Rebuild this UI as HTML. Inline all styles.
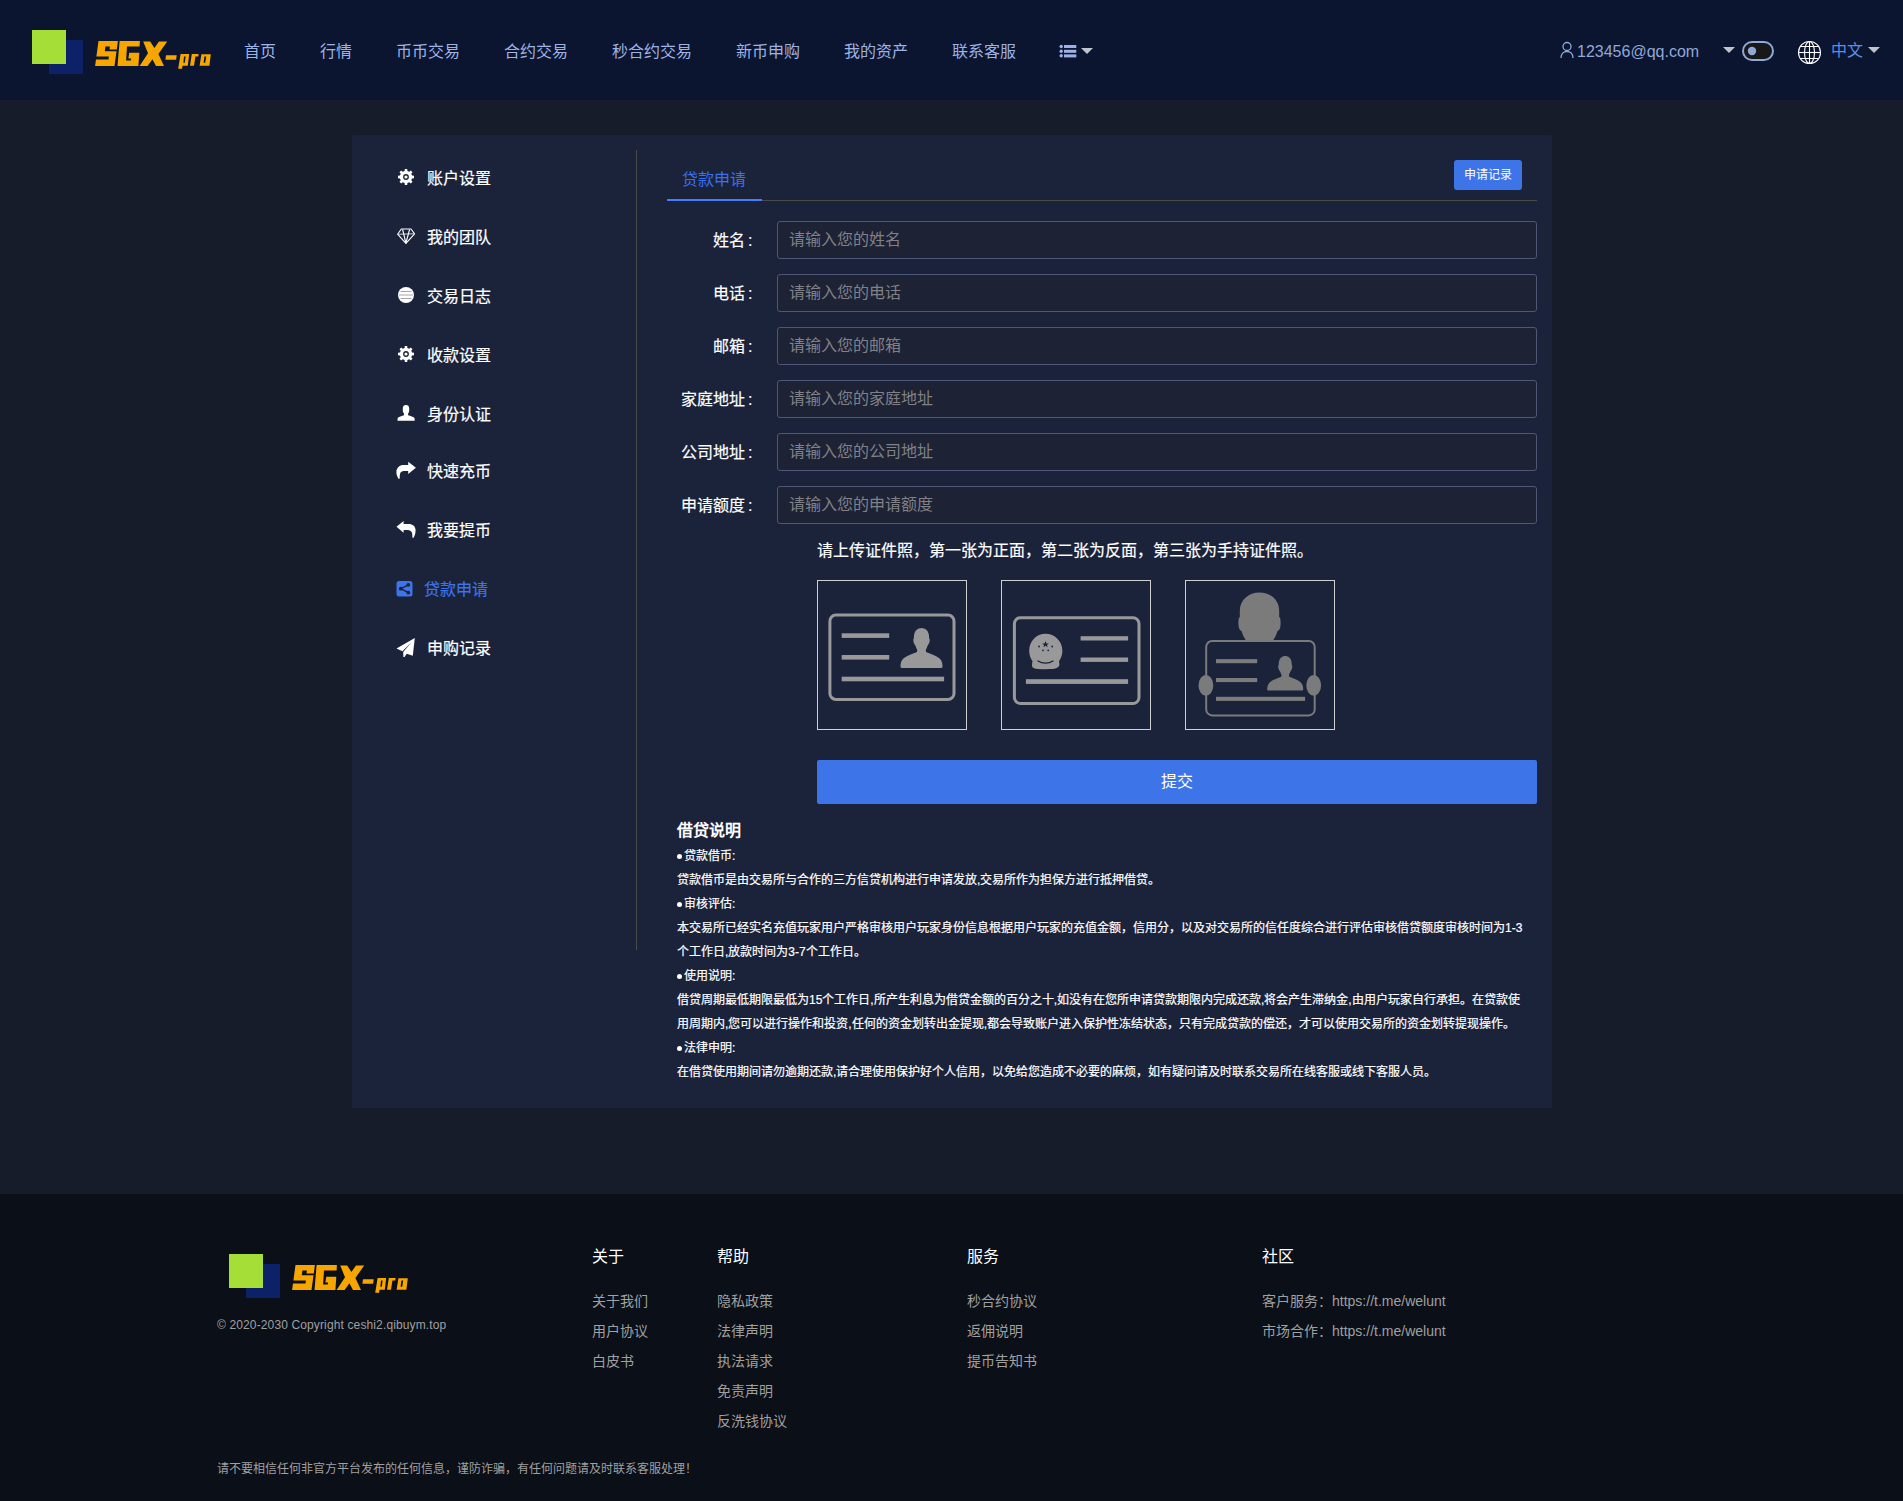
<!DOCTYPE html>
<html lang="zh-CN">
<head>
<meta charset="utf-8">
<style>
*{margin:0;padding:0;box-sizing:border-box}
html,body{width:1903px;height:1501px;overflow:hidden}
body{background:#171c2a;font-family:"Liberation Sans",sans-serif;color:#fff;position:relative}
.a{position:absolute;white-space:nowrap}
.b{-webkit-text-stroke:0.2px currentColor}
#hdr{position:absolute;left:0;top:0;width:1903px;height:100px;background:#0b1530}
.nav{position:absolute;left:244px;top:42px;height:20px;display:flex;gap:44px;font-size:16px;line-height:20px;color:#9db2e4;white-space:nowrap}
#panel{position:absolute;left:352px;top:135px;width:1200px;height:973px;background:#1b233b;border-radius:2px}
.side{position:absolute;left:427px;font-size:16px;line-height:20px;color:#fff;white-space:nowrap}
.sico{position:absolute;left:396px;width:20px;height:20px}
#vline{position:absolute;left:636px;top:150px;width:1px;height:800px;background:#4a4a4a}
.lbl{position:absolute;width:120px;left:632.5px;text-align:right;font-size:16px;line-height:20px;color:#fff;white-space:nowrap}
.inp{position:absolute;left:777px;width:760px;height:38px;background:#1e2235;border:1px solid #4e5775;border-radius:3px;font-size:16px;line-height:36px;color:#808186;padding-left:11px;white-space:nowrap}
.box{position:absolute;top:580px;width:150px;height:150px;border:1px solid #cfcfcf}
.note{position:absolute;left:677px;font-size:12px;line-height:24px;color:#fff;white-space:nowrap}
.dot{display:inline-block;width:5px;height:5px;border-radius:50%;background:#fff;margin-right:2px;vertical-align:1px}
#ftr{position:absolute;left:0;top:1194px;width:1903px;height:307px;background:#0a0f18}
.fh{position:absolute;font-size:16px;line-height:20px;color:#fff;white-space:nowrap}
.fl{position:absolute;font-size:14px;line-height:18px;color:#a0a0a0;white-space:nowrap}
</style>
</head>
<body>
<div id="hdr"></div>
<svg class="a" style="left:0;top:0" width="240" height="100" viewBox="0 0 240 100">
  <g>
    <rect x="49" y="40" width="34" height="34" fill="#0c2168"/>
    <rect x="32" y="30" width="34" height="34" fill="#a6de38"/>
    <g fill="#f7a600" transform="translate(92,38)">
      <path d="M6.5,3 L25.9,3 L24.8,11.4 L17.5,11.4 L17.9,8.5 L13.4,8.5 L12.8,13.2 L24.5,13.2 L22.5,28 L3.1,28 L4,21.5 L16.5,21.5 L16.9,18.6 L4.4,18.6 Z"/>
      <path d="M27.6,3 L47.9,3 L47.6,8.4 L35,8.4 L34.1,22.4 L38.8,22.4 L39.1,20.5 L36.4,20.5 L37.2,14.8 L47.3,14.8 L46.4,28 L25.5,28 Z"/>
      <path d="M51.2,3.4 L58.2,3.4 L62.4,10 L67,3.4 L75.2,3.4 L66.4,16 L72,28 L64,28 L60.4,21.2 L55.6,28 L47.6,28 L56,15.2 Z"/>
      <path d="M74,17.2 L84.7,17.2 L84.1,21.8 L73.4,21.8 Z"/>
    </g>
    <g fill="#f7a600">
      <path fill-rule="evenodd" d="M180.6,54 L189.2,54 L187.8,65.8 L182.5,65.8 L182.1,68.8 L178.2,68.8 Z M184,56.4 L185.6,56.4 L184.8,62.8 L183.4,62.8 Z"/>
      <path d="M191.8,54 L198.6,54 L198.3,56.4 L195.4,56.4 L194,65.8 L190,65.8 Z"/>
      <path fill-rule="evenodd" d="M201.4,54.2 L210.8,54.2 L209.4,65.8 L199.6,65.8 Z M204.4,56.6 L206.2,56.6 L205.2,62.8 L203.6,62.8 Z"/>
    </g>
  </g>
</svg>
<div class="nav">
  <span>首页</span><span>行情</span><span>币币交易</span><span>合约交易</span><span>秒合约交易</span><span>新币申购</span><span>我的资产</span><span>联系客服</span>
</div>
<!-- list icon + caret -->
<svg class="a" style="left:1056px;top:40px" width="40" height="22" viewBox="1056 40 40 22">
  <g fill="#9db2e4">
    <circle cx="1061.2" cy="46.5" r="1.7"/><rect x="1064" y="45" width="12.3" height="3"/>
    <circle cx="1061.2" cy="51.2" r="1.7"/><rect x="1064" y="49.8" width="12.3" height="3"/>
    <circle cx="1061.2" cy="55.8" r="1.7"/><rect x="1064" y="54.4" width="12.3" height="3"/>
  </g>
  <path d="M1081,48 L1093,48 L1087,54 Z" fill="#c0c4cc"/>
</svg>
<!-- right header -->
<svg class="a" style="left:1558px;top:40px" width="20" height="20" viewBox="1558 40 20 20">
  <g fill="none" stroke="#8ea8d8" stroke-width="1.3">
    <circle cx="1567" cy="46.5" r="4"/>
    <path d="M1561,58 C1561,53.5 1564,51.5 1567,51.5 C1570,51.5 1573,53.5 1573,58"/>
  </g>
</svg>
<div class="a" style="left:1577px;top:42px;font-size:16px;line-height:20px;color:#8ea8d8">123456@qq.com</div>
<svg class="a" style="left:1720px;top:38px" width="180" height="28" viewBox="1720 38 180 28">
  <path d="M1723,47 L1735,47 L1729,53 Z" fill="#c0c4cc"/>
  <rect x="1743" y="42" width="30" height="18" rx="9" fill="#181818" stroke="#8ea8d8" stroke-width="2"/>
  <circle cx="1752" cy="51" r="4.2" fill="#8ea8d8"/>
  <g fill="none" stroke="#fff" stroke-width="1.1">
    <circle cx="1809.5" cy="52.5" r="11"/>
    <ellipse cx="1809.5" cy="52.5" rx="5" ry="11"/>
    <line x1="1809.5" y1="41.5" x2="1809.5" y2="63.5"/>
    <line x1="1798.5" y1="52.5" x2="1820.5" y2="52.5"/>
    <path d="M1800.5,46.5 L1818.5,46.5 M1800.5,58.5 L1818.5,58.5"/>
  </g>
  <path d="M1868,47 L1880,47 L1874,53 Z" fill="#c0c4cc"/>
</svg>
<div class="a" style="left:1831px;top:41px;font-size:16px;line-height:20px;color:#5a8fe6">中文</div>

<div id="panel"></div>
<div id="vline"></div>

<!-- sidebar -->
<div class="side b" style="top:169px">账户设置</div>
<div class="side b" style="top:228px">我的团队</div>
<div class="side b" style="top:287px">交易日志</div>
<div class="side b" style="top:346px">收款设置</div>
<div class="side b" style="top:405px">身份认证</div>
<div class="side b" style="top:462px">快速充币</div>
<div class="side b" style="top:521px">我要提币</div>
<div class="side b" style="top:580px;left:424px;color:#3d74e8">贷款申请</div>
<div class="side b" style="top:639px">申购记录</div>

<svg class="a" style="left:390px;top:160px" width="30" height="510" viewBox="390 160 30 510">
  <!-- gear 1 -->
  <g><path fill="#fff" fill-rule="evenodd" d="M404.61,170.96 L404.80,168.99 L407.20,168.99 L407.39,170.96 L409.29,171.74 L410.82,170.49 L412.51,172.18 L411.26,173.71 L412.04,175.61 L414.01,175.80 L414.01,178.20 L412.04,178.39 L411.26,180.29 L412.51,181.82 L410.82,183.51 L409.29,182.26 L407.39,183.04 L407.20,185.01 L404.80,185.01 L404.61,183.04 L402.71,182.26 L401.18,183.51 L399.49,181.82 L400.74,180.29 L399.96,178.39 L397.99,178.20 L397.99,175.80 L399.96,175.61 L400.74,173.71 L399.49,172.18 L401.18,170.49 L402.71,171.74 Z M403.10,177.00 a2.90,2.90 0 1 0 5.80,0 a2.90,2.90 0 1 0 -5.80,0 Z"/><circle cx="406" cy="177" r="1.6" fill="#fff"/></g>
  <!-- diamond -->
  <g fill="none" stroke="#fff" stroke-width="1.1" stroke-linejoin="round">
    <path d="M401.3,229 L411,229 L414.6,233.8 L405.9,243.3 L397.6,234.2 Z"/>
    <path d="M397.6,234.2 L414.6,233.8" stroke="#d0d0d8"/>
    <path d="M402.6,229.5 L405.9,243 L409.6,229.5"/>
  </g>
  <!-- circle with lines -->
  <circle cx="406" cy="295" r="8" fill="#fff"/>
  <g stroke="#9a9aa8" stroke-width="0.9">
    <line x1="400.5" y1="291.5" x2="411.5" y2="291.5"/>
    <line x1="399" y1="295" x2="413" y2="295"/>
    <line x1="400.5" y1="298.5" x2="411.5" y2="298.5"/>
  </g>
  <!-- gear 2 -->
  <g transform="translate(0,177)"><path fill="#fff" fill-rule="evenodd" d="M404.61,170.96 L404.80,168.99 L407.20,168.99 L407.39,170.96 L409.29,171.74 L410.82,170.49 L412.51,172.18 L411.26,173.71 L412.04,175.61 L414.01,175.80 L414.01,178.20 L412.04,178.39 L411.26,180.29 L412.51,181.82 L410.82,183.51 L409.29,182.26 L407.39,183.04 L407.20,185.01 L404.80,185.01 L404.61,183.04 L402.71,182.26 L401.18,183.51 L399.49,181.82 L400.74,180.29 L399.96,178.39 L397.99,178.20 L397.99,175.80 L399.96,175.61 L400.74,173.71 L399.49,172.18 L401.18,170.49 L402.71,171.74 Z M403.10,177.00 a2.90,2.90 0 1 0 5.80,0 a2.90,2.90 0 1 0 -5.80,0 Z"/><circle cx="406" cy="177" r="1.6" fill="#fff"/></g>
  <!-- user -->
  <path fill="#fff" d="M406,404.9 C408,404.9 409.2,406 409.2,408.3 L409.2,410.5 C409.2,411.8 408.6,413 408,413.8 L408.1,415.3 C410.5,416 413.2,416.8 414.2,417.8 C414.6,418.3 414.7,419 414.7,420.8 L397.5,420.8 C397.5,419 397.6,418.3 398,417.8 C399,416.8 401.7,416 404,415.3 L404.1,413.8 C403.5,413 402.8,411.8 402.8,410.5 L402.8,408.3 C402.8,406 404,404.9 406,404.9 Z"/>
  <!-- forward arrow -->
  <path fill="#fff" d="M408.2,461.7 L415.9,467.8 L408.2,474 L408.2,470.9 L403.5,470.9 C401.2,471.1 399.8,472.8 399.8,475.5 L399.7,478.8 L398.5,478.8 C397.3,477 396.4,474.8 396.4,472.3 C396.4,467.8 399.5,465.1 403.8,465.1 L408.2,465.1 Z"/>
  <!-- reply arrow -->
  <path fill="#fff" d="M403.6,520.9 L396.5,526.8 L403.6,532.8 L403.6,529.9 L408,529.9 C410.5,530 412.3,531.8 412.3,534.5 L412.4,537.7 L413.6,537.7 C414.6,536 415.6,533 415.6,530.5 C415.6,526.5 412.8,524.1 408.5,524.1 L403.6,524.1 Z"/>
  <!-- share square -->
  <rect x="396.5" y="581" width="16" height="15.5" rx="2.5" fill="#3d74e8"/>
  <g fill="#1b233b">
    <circle cx="408.3" cy="584.8" r="1.9"/><circle cx="400.8" cy="588.7" r="1.9"/><circle cx="408.3" cy="592.6" r="1.9"/>
  </g>
  <path d="M408.3,584.8 L400.8,588.7 L408.3,592.6" stroke="#1b233b" stroke-width="1.3" fill="none"/>
  <!-- paper plane -->
  <path fill="#fff" d="M414.8,638 L396.5,648.6 L402.4,651.2 L411.7,642.1 L403.2,651.9 L403.4,656.9 L404.6,656.9 L406.7,653.8 L412.8,655.7 Z"/>
</svg>

<!-- tab -->
<div class="a" style="left:682px;top:170px;font-size:16px;line-height:20px;color:#3a6ff0">贷款申请</div>
<div class="a" style="left:762px;top:200px;width:775px;height:1px;background:#4a4a4c"></div>
<div class="a" style="left:667px;top:199px;width:95px;height:2px;background:#3f7ffc"></div>
<div class="a" style="left:1454px;top:160px;width:68px;height:30px;background:#3d74e8;border-radius:3px;font-size:12px;line-height:30px;text-align:center;color:#fff">申请记录</div>

<!-- form -->
<div class="lbl b" style="top:231px">姓名<span style="margin-left:3px">:</span></div>
<div class="inp" style="top:221px">请输入您的姓名</div>
<div class="lbl b" style="top:284px">电话<span style="margin-left:3px">:</span></div>
<div class="inp" style="top:274px">请输入您的电话</div>
<div class="lbl b" style="top:337px">邮箱<span style="margin-left:3px">:</span></div>
<div class="inp" style="top:327px">请输入您的邮箱</div>
<div class="lbl b" style="top:390px">家庭地址<span style="margin-left:3px">:</span></div>
<div class="inp" style="top:380px">请输入您的家庭地址</div>
<div class="lbl b" style="top:443px">公司地址<span style="margin-left:3px">:</span></div>
<div class="inp" style="top:433px">请输入您的公司地址</div>
<div class="lbl b" style="top:496px">申请额度<span style="margin-left:3px">:</span></div>
<div class="inp" style="top:486px">请输入您的申请额度</div>

<div class="a b" style="left:817px;top:541px;font-size:16px;line-height:20px;color:#fff">请上传证件照，第一张为正面，第二张为反面，第三张为手持证件照。</div>

<div class="box" style="left:817px"></div>
<div class="box" style="left:1001px"></div>
<div class="box" style="left:1185px"></div>

<svg class="a" style="left:817px;top:580px" width="520" height="150" viewBox="817 580 520 150">
  <!-- card 1 -->
  <g fill="#999">
    <rect x="829.9" y="615.1" width="124.1" height="84.3" rx="6" fill="none" stroke="#999" stroke-width="3"/>
    <rect x="841.7" y="633.3" width="47.5" height="4.6"/>
    <rect x="841.7" y="655" width="47.5" height="4.6"/>
    <rect x="841.7" y="676.7" width="102.4" height="4.6"/>
    <path transform="translate(921,628) scale(1.02,1.085) translate(-921,-628)" d="M921,628 c4.5,0 8,2.5 8,8.8 c0,1 0.2,1.3 0.6,1.9 c0,2.8 -1,4.4 -2.3,5.8 c-0.5,1.4 -1,2.7 -1.6,3.5 l0.2,2.2 c5,1.8 10.5,3.6 13.4,6 c2.5,2.1 2.8,5.2 2.8,7.6 c0,0.6 -0.6,1.1 -1.2,1.1 h-38.8 c-0.6,0 -1.2,-0.5 -1.2,-1.1 c0,-2.4 0.3,-5.5 2.8,-7.6 c2.9,-2.4 8.4,-4.2 13.4,-6 l0.2,-2.2 c-0.6,-0.8 -1.1,-2.1 -1.6,-3.5 c-1.3,-1.4 -2.3,-3 -2.3,-5.8 c0.4,-0.6 0.6,-0.9 0.6,-1.9 c0,-6.3 3.5,-8.8 8,-8.8 Z"/>
  </g>
  <!-- card 2 -->
  <g fill="#999">
    <rect x="1014.4" y="617.7" width="124.6" height="85.8" rx="6" fill="none" stroke="#999" stroke-width="3"/>
    <rect x="1080.6" y="636.2" width="47.5" height="4.3"/>
    <rect x="1080.6" y="657.5" width="47.5" height="4.4"/>
    <rect x="1025.9" y="679.2" width="102.2" height="4.7"/>
    <path d="M1045.5,633.8 c9.2,0 16.9,7.4 16.9,16.9 c0,4.2 -1.5,7.8 -3.4,10.5 l0.2,1.8 c0.6,1 0.4,3.4 -1.6,4.6 c-2.6,1.6 -6.6,1.6 -12.1,1.6 c-5.5,0 -9.7,0 -11.9,-1.2 c-1.8,-1 -1.8,-3.3 -1.5,-4.6 l0.4,-2.4 c-2,-2.6 -3.3,-6.1 -3.3,-10.3 c0,-9.5 7.1,-16.9 16.3,-16.9 Z"/>
  </g>
  <g fill="#1b233b">
    <path d="M1045.5,641 l0.9,2.4 l2.5,0 l-2,1.5 l0.8,2.4 l-2.2,-1.5 l-2.2,1.5 l0.8,-2.4 l-2,-1.5 l2.5,0 Z"/>
    <circle cx="1039" cy="646.5" r="0.9"/><circle cx="1052.2" cy="646.5" r="0.9"/>
    <circle cx="1043" cy="650.3" r="0.9"/><circle cx="1048.2" cy="650.3" r="0.9"/>
  </g>
  <path d="M1037.5,660.7 q8,5 16,0" stroke="#1b233b" stroke-width="1.3" fill="none"/>
  <!-- card 3 -->
  <g fill="#7b7b7b">
    <path d="M1259.5,592.5 C1270.5,592.5 1279.2,600 1279.2,611 L1279.2,617 C1280.5,617.5 1280.6,620 1280.6,623.5 C1280.6,628 1279.5,630.5 1277.5,631 C1276.5,634.5 1275,637.5 1273,640.5 L1246,640.5 C1244,637.5 1242.5,634.5 1241.5,631 C1239.5,630.5 1238.4,628 1238.4,623.5 C1238.4,620 1238.5,617.5 1239.8,617 L1239.8,611 C1239.8,600 1248.5,592.5 1259.5,592.5 Z"/>
    <rect x="1206.2" y="641" width="108.5" height="74.4" rx="6" fill="none" stroke="#7b7b7b" stroke-width="2"/>
    <ellipse cx="1205.9" cy="685.4" rx="7.4" ry="10.3"/>
    <ellipse cx="1313.7" cy="685.4" rx="7.4" ry="10.3"/>
    <rect x="1216" y="659.1" width="41.2" height="4.1"/>
    <rect x="1216" y="678" width="41.2" height="4.1"/>
    <rect x="1216" y="696.8" width="89.1" height="4.1"/>
    <path transform="translate(1284.8,656) scale(1.09,1.175) translate(-1284.8,-656)" d="M1284.8,656 c3.6,0 6.4,2 6.4,7 c0,0.8 0.2,1 0.5,1.5 c0,2.2 -0.8,3.5 -1.8,4.6 c-0.4,1.1 -0.8,2.1 -1.3,2.8 l0.2,1.8 c4,1.4 8.4,2.9 10.7,4.8 c2,1.7 2.2,4.1 2.2,6 c0,0.5 -0.5,0.9 -1,0.9 h-31 c-0.5,0 -1,-0.4 -1,-0.9 c0,-1.9 0.2,-4.3 2.2,-6 c2.3,-1.9 6.7,-3.4 10.7,-4.8 l0.2,-1.8 c-0.5,-0.7 -0.9,-1.7 -1.3,-2.8 c-1,-1.1 -1.8,-2.4 -1.8,-4.6 c0.3,-0.5 0.5,-0.7 0.5,-1.5 c0,-5 2.8,-7 6.4,-7 Z"/>
  </g>
</svg>

<div class="a" style="left:817px;top:760px;width:720px;height:44px;background:#3d75e9;border-radius:2px;font-size:16px;line-height:44px;text-align:center;color:#fff">提交</div>

<!-- notes -->
<div class="a" style="left:677px;top:821px;font-size:16px;line-height:20px;font-weight:bold;color:#fff">借贷说明</div>
<div class="note b" style="top:844px"><span class="dot"></span>贷款借币:</div>
<div class="note b" style="top:868px">贷款借币是由交易所与合作的三方信贷机构进行申请发放,交易所作为担保方进行抵押借贷。</div>
<div class="note b" style="top:892px"><span class="dot"></span>审核评估:</div>
<div class="note b" style="top:916px">本交易所已经实名充值玩家用户严格审核用户玩家身份信息根据用户玩家的充值金额，信用分，以及对交易所的信任度综合进行评估审核借贷额度审核时间为1-3</div>
<div class="note b" style="top:940px">个工作日,放款时间为3-7个工作日。</div>
<div class="note b" style="top:964px"><span class="dot"></span>使用说明:</div>
<div class="note b" style="top:988px">借贷周期最低期限最低为15个工作日,所产生利息为借贷金额的百分之十,如没有在您所申请贷款期限内完成还款,将会产生滞纳金,由用户玩家自行承担。在贷款使</div>
<div class="note b" style="top:1012px">用周期内,您可以进行操作和投资,任何的资金划转出金提现,都会导致账户进入保护性冻结状态，只有完成贷款的偿还，才可以使用交易所的资金划转提现操作。</div>
<div class="note b" style="top:1036px"><span class="dot"></span>法律申明:</div>
<div class="note b" style="top:1060px">在借贷使用期间请勿逾期还款,请合理使用保护好个人信用，以免给您造成不必要的麻烦，如有疑问请及时联系交易所在线客服或线下客服人员。</div>

<!-- footer -->
<div id="ftr"></div>
<svg class="a" style="left:197px;top:1224px" width="240" height="100" viewBox="0 0 240 100"><g>
    <rect x="49" y="40" width="34" height="34" fill="#0c2168"/>
    <rect x="32" y="30" width="34" height="34" fill="#a6de38"/>
    <g fill="#f7a600" transform="translate(92,38)">
      <path d="M6.5,3 L25.9,3 L24.8,11.4 L17.5,11.4 L17.9,8.5 L13.4,8.5 L12.8,13.2 L24.5,13.2 L22.5,28 L3.1,28 L4,21.5 L16.5,21.5 L16.9,18.6 L4.4,18.6 Z"/>
      <path d="M27.6,3 L47.9,3 L47.6,8.4 L35,8.4 L34.1,22.4 L38.8,22.4 L39.1,20.5 L36.4,20.5 L37.2,14.8 L47.3,14.8 L46.4,28 L25.5,28 Z"/>
      <path d="M51.2,3.4 L58.2,3.4 L62.4,10 L67,3.4 L75.2,3.4 L66.4,16 L72,28 L64,28 L60.4,21.2 L55.6,28 L47.6,28 L56,15.2 Z"/>
      <path d="M74,17.2 L84.7,17.2 L84.1,21.8 L73.4,21.8 Z"/>
    </g>
    <g fill="#f7a600">
      <path fill-rule="evenodd" d="M180.6,54 L189.2,54 L187.8,65.8 L182.5,65.8 L182.1,68.8 L178.2,68.8 Z M184,56.4 L185.6,56.4 L184.8,62.8 L183.4,62.8 Z"/>
      <path d="M191.8,54 L198.6,54 L198.3,56.4 L195.4,56.4 L194,65.8 L190,65.8 Z"/>
      <path fill-rule="evenodd" d="M201.4,54.2 L210.8,54.2 L209.4,65.8 L199.6,65.8 Z M204.4,56.6 L206.2,56.6 L205.2,62.8 L203.6,62.8 Z"/>
    </g></g></svg>
<div class="a" style="left:217px;top:1317px;font-size:12px;line-height:16px;color:#a0a0a0;letter-spacing:0.13px">© 2020-2030 Copyright ceshi2.qibuym.top</div>

<div class="fh" style="left:592px;top:1247px">关于</div>
<div class="fl" style="left:592px;top:1292px">关于我们</div>
<div class="fl" style="left:592px;top:1322px">用户协议</div>
<div class="fl" style="left:592px;top:1352px">白皮书</div>

<div class="fh" style="left:717px;top:1247px">帮助</div>
<div class="fl" style="left:717px;top:1292px">隐私政策</div>
<div class="fl" style="left:717px;top:1322px">法律声明</div>
<div class="fl" style="left:717px;top:1352px">执法请求</div>
<div class="fl" style="left:717px;top:1382px">免责声明</div>
<div class="fl" style="left:717px;top:1412px">反洗钱协议</div>

<div class="fh" style="left:967px;top:1247px">服务</div>
<div class="fl" style="left:967px;top:1292px">秒合约协议</div>
<div class="fl" style="left:967px;top:1322px">返佣说明</div>
<div class="fl" style="left:967px;top:1352px">提币告知书</div>

<div class="fh" style="left:1262px;top:1247px">社区</div>
<div class="fl" style="left:1262px;top:1292px">客户服务：https://t.me/welunt</div>
<div class="fl" style="left:1262px;top:1322px">市场合作：https://t.me/welunt</div>

<div class="a" style="left:217px;top:1461px;font-size:12px;line-height:16px;color:#a0a0a0">请不要相信任何非官方平台发布的任何信息，谨防诈骗，有任何问题请及时联系客服处理！</div>
</body>
</html>
